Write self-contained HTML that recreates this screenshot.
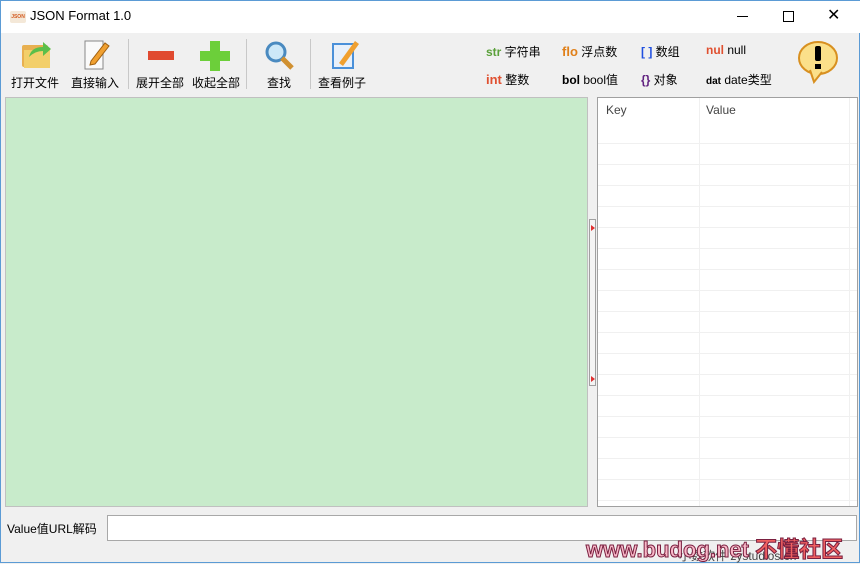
<!DOCTYPE html>
<html><head><meta charset="utf-8"><style>
*{margin:0;padding:0;box-sizing:border-box}
body{width:860px;height:563px;background:#f0f0f0;font-family:"Liberation Sans","Noto Sans CJK SC",sans-serif;font-size:12px;color:#000;position:relative;overflow:hidden;border:1px solid #5b9bd5}
.abs{position:absolute}
.tb{top:73px;font-size:12px;white-space:nowrap}
.sep{top:38px;width:1px;height:50px;background:#c8c8c8}
.leg{font-size:12px;white-space:nowrap}
.row{position:absolute;left:0;right:0;height:1px;background:#f0f0f0}
</style></head><body>
<div class="abs" style="left:0;top:0;width:860px;height:32px;background:#fff"></div>
<div class="abs" style="left:9px;top:10px;width:16px;height:12px;background:#f4e8d8;border-radius:2px;font-size:5px;color:#d35a20;font-weight:bold;line-height:12px;text-align:center">JSON</div>
<div class="abs" style="left:29px;top:7px;font-size:13px">JSON Format 1.0</div>
<div class="abs" style="left:736px;top:15px;width:11px;height:1px;background:#000"></div>
<div class="abs" style="left:782px;top:10px;width:11px;height:11px;border:1px solid #000"></div>
<div class="abs" style="left:826px;top:4px;font-size:16px;font-weight:300">✕</div>

<!-- toolbar icons -->
<svg class="abs" style="left:0;top:36px" width="380" height="36">
 <rect x="21" y="8" width="26" height="22" rx="2" fill="#e8b050"/><rect x="23" y="13" width="26" height="18" fill="#f3cf6a"/>
 <path d="M28 20 Q30 10 42 10 L42 5 L50 12 L42 19 L42 14 Q34 14 28 20Z" fill="#5bbf4a"/>
 <path d="M84 4 L102 4 L102 32 L84 32Z" fill="#fafafa" stroke="#888"/>
 <path d="M90 24 L104 6 L108 9 L94 27 L89 28Z" fill="#f0a030" stroke="#a06010"/>
 <rect x="147" y="14" width="26" height="9" fill="#e04a30"/>
 <path d="M209 4h10v10h10v10h-10v10h-10v-10h-10v-10h10z" fill="#6ccf3a"/>
 <circle cx="275" cy="15" r="9" fill="#cde8f8" stroke="#4a8ac0" stroke-width="3"/>
 <path d="M281 21 L291 31" stroke="#d09030" stroke-width="5"/>
 <rect x="331" y="6" width="22" height="26" fill="#4a90d9"/><rect x="333" y="8" width="18" height="22" fill="#e8f0fa"/>
 <path d="M338 26 L354 4 L358 7 L342 29Z" fill="#f0a030"/>
</svg>
<div class="abs tb" style="left:10px">打开文件</div>
<div class="abs tb" style="left:70px">直接输入</div>
<div class="abs sep" style="left:127px"></div>
<div class="abs tb" style="left:135px">展开全部</div>
<div class="abs tb" style="left:191px">收起全部</div>
<div class="abs sep" style="left:245px"></div>
<div class="abs tb" style="left:266px">查找</div>
<div class="abs sep" style="left:309px"></div>
<div class="abs tb" style="left:317px">查看例子</div>

<div class="abs leg" style="left:485px;top:42px"><b style="color:#5aa03a">str</b> 字符串</div>
<div class="abs leg" style="left:561px;top:42px"><b style="color:#e0801a;font-size:13px">flo</b> 浮点数</div>
<div class="abs leg" style="left:640px;top:42px"><b style="color:#2050e0">[ ]</b> 数组</div>
<div class="abs leg" style="left:705px;top:42px"><b style="color:#e05030">nul</b> null</div>
<div class="abs leg" style="left:485px;top:70px"><b style="color:#e05030;font-size:13px">int</b> 整数</div>
<div class="abs leg" style="left:561px;top:70px"><b>bol</b> bool值</div>
<div class="abs leg" style="left:640px;top:70px"><b style="color:#602080">{}</b> 对象</div>
<div class="abs leg" style="left:705px;top:70px"><b style="font-size:10px">dat</b> date类型</div>
<svg class="abs" style="left:795px;top:39px" width="44" height="44">
 <ellipse cx="22" cy="18" rx="19" ry="16" fill="#fbe08a" stroke="#d89020" stroke-width="2"/>
 <path d="M14 30 L18 42 L26 32" fill="#fbe08a" stroke="#d89020" stroke-width="2"/>
 <rect x="19" y="6" width="6" height="15" rx="2"/><rect x="19" y="24" width="6" height="5"/>
</svg>

<div class="abs" style="left:4px;top:96px;width:583px;height:410px;background:#c8ebcb;border:1px solid #c0c0c0"></div>
<div class="abs" style="left:588px;top:218px;width:7px;height:167px;border:1px solid #a0a0a0;background:#f4f4f4"></div>
<div class="abs" style="left:590px;top:224px;width:0;height:0;border-left:4px solid #e03030;border-top:3px solid transparent;border-bottom:3px solid transparent"></div>
<div class="abs" style="left:590px;top:375px;width:0;height:0;border-left:4px solid #e03030;border-top:3px solid transparent;border-bottom:3px solid transparent"></div>

<div class="abs" style="left:596px;top:96px;width:261px;height:410px;background:#fff;border:1px solid #a0a0a0">
 <div class="abs" style="left:8px;top:5px;color:#444">Key</div>
 <div class="abs" style="left:108px;top:5px;color:#444">Value</div>
 <div class="abs" style="left:101px;top:0;width:1px;height:408px;background:#f0f0f0"></div>
 <div class="abs" style="left:251px;top:0;width:1px;height:408px;background:#f0f0f0"></div>
 <div class="row" style="top:45px"></div><div class="row" style="top:66px"></div><div class="row" style="top:87px"></div><div class="row" style="top:108px"></div><div class="row" style="top:129px"></div><div class="row" style="top:150px"></div><div class="row" style="top:171px"></div><div class="row" style="top:192px"></div><div class="row" style="top:213px"></div><div class="row" style="top:234px"></div><div class="row" style="top:255px"></div><div class="row" style="top:276px"></div><div class="row" style="top:297px"></div><div class="row" style="top:318px"></div><div class="row" style="top:339px"></div><div class="row" style="top:360px"></div><div class="row" style="top:381px"></div><div class="row" style="top:402px"></div>
</div>

<div class="abs" style="left:6px;top:519px">Value值URL解码</div>
<div class="abs" style="left:106px;top:514px;width:750px;height:26px;background:#fff;border:1px solid #a8a8a8"></div>
<div class="abs" style="left:678px;top:546px;color:#444;font-size:12px">小数软件 zystudios.cn</div>
<div class="abs" style="left:585px;top:531px;font-size:22px;font-weight:bold;color:#f8b8c8;-webkit-text-stroke:1px #7a2040;white-space:nowrap;font-family:'Liberation Sans','Noto Sans CJK SC',sans-serif">www.budog.net <span style="color:#f06060">不懂社区</span></div>
</body></html>
